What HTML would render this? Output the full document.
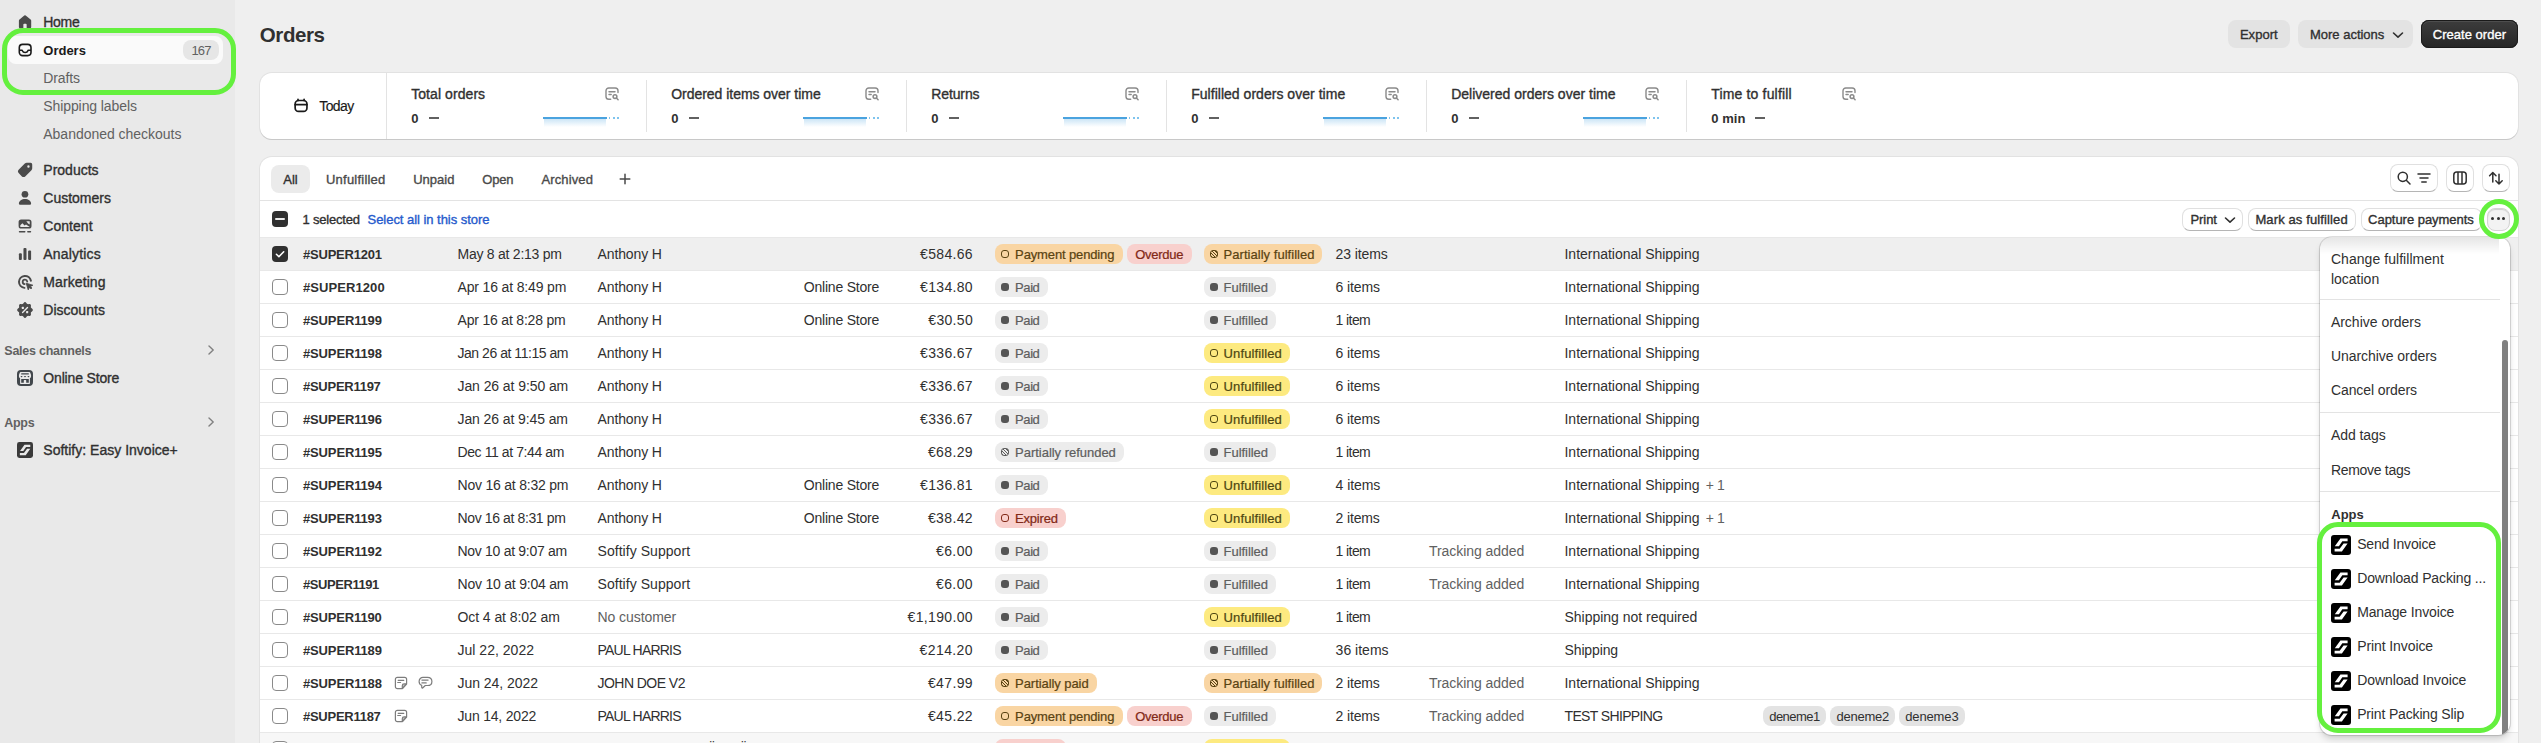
<!DOCTYPE html>
<html lang="en"><head><meta charset="utf-8"><title>Orders</title>
<style>
html,body{margin:0;padding:0;}
body{width:2541px;height:743px;overflow:hidden;background:#efefef;position:relative;font-family:"Liberation Sans",sans-serif;}
.b{position:absolute;box-sizing:border-box;}
.t{position:absolute;white-space:nowrap;line-height:20px;height:20px;}
</style></head><body>

<div class="b" style="left:0px;top:0px;width:235px;height:743px;background:#e9e9e9;border-radius:0px;"></div>
<svg class="b" style="left:15px;top:12px;" width="20" height="20" viewBox="0 0 20 20"><path fill="#4a4a4a" d="M9.300 3.450a1.100 1.100 0 0 1 1.400 0l4.900 4.100c.4.300.6.750.6 1.200V15a1.500 1.500 0 0 1-1.500 1.500H11.650V12.600a.9.9 0 0 0-.9-.9H9.250a.9.9 0 0 0-.9.9V16.500H5.400A1.500 1.500 0 0 1 3.900 15V8.750c0-.450.2-.9.6-1.200Z"/></svg>
<span class="t" style="left:43.3px;top:12.0px;font-size:14px;font-weight:400;color:#303030;letter-spacing:-0.287px;-webkit-text-stroke:0.35px #303030;">Home</span>
<div class="b" style="left:8px;top:36px;width:215px;height:28px;background:#fafafa;border-radius:8px;"></div>
<svg class="b" style="left:15px;top:40px;" width="20" height="20" viewBox="0 0 20 20"><rect x="4.300" y="4.400" width="11.700" height="11.200" rx="3.300" fill="none" stroke="#1a1a1a" stroke-width="1.600"/><path fill="none" stroke="#1a1a1a" stroke-width="1.600" stroke-linejoin="round" d="M4.300 10.200h2.300c.5 0 .9.300 1 .8.250 1 .95 1.550 2.550 1.550s2.300-.55 2.550-1.550c.1-.5.5-.8 1-.8H16"/></svg>
<span class="t" style="left:43.3px;top:40.5px;font-size:13px;font-weight:700;color:#1a1a1a;letter-spacing:-0.005px;">Orders</span>
<div class="b" style="left:183px;top:40px;width:36px;height:20px;background:#e6e6e6;border-radius:8px;"></div>
<span class="t" style="left:191.6px;top:41.0px;font-size:13px;font-weight:400;color:#616161;letter-spacing:-0.964px;">167</span>
<span class="t" style="left:43.3px;top:68.0px;font-size:14px;font-weight:400;color:#616161;letter-spacing:-0.123px;">Drafts</span>
<span class="t" style="left:43.3px;top:96.0px;font-size:14px;font-weight:400;color:#616161;letter-spacing:-0.097px;">Shipping labels</span>
<span class="t" style="left:43.3px;top:124.0px;font-size:14px;font-weight:400;color:#616161;letter-spacing:-0.024px;">Abandoned checkouts</span>
<span class="t" style="left:43.3px;top:160.0px;font-size:14px;font-weight:400;color:#303030;letter-spacing:0.006px;-webkit-text-stroke:0.35px #303030;">Products</span>
<span class="t" style="left:43.3px;top:188.0px;font-size:14px;font-weight:400;color:#303030;letter-spacing:-0.009px;-webkit-text-stroke:0.35px #303030;">Customers</span>
<span class="t" style="left:43.3px;top:216.0px;font-size:14px;font-weight:400;color:#303030;letter-spacing:0.038px;-webkit-text-stroke:0.35px #303030;">Content</span>
<span class="t" style="left:43.3px;top:244.0px;font-size:14px;font-weight:400;color:#303030;letter-spacing:0.175px;-webkit-text-stroke:0.35px #303030;">Analytics</span>
<span class="t" style="left:43.3px;top:272.0px;font-size:14px;font-weight:400;color:#303030;letter-spacing:0.092px;-webkit-text-stroke:0.35px #303030;">Marketing</span>
<span class="t" style="left:43.3px;top:300.0px;font-size:14px;font-weight:400;color:#303030;letter-spacing:0.014px;-webkit-text-stroke:0.35px #303030;">Discounts</span>
<svg class="b" style="left:15px;top:160px;" width="20" height="20" viewBox="0 0 20 20"><g transform="translate(10.2 9.800) scale(1.080) translate(-10 -10)"><path fill="#4a4a4a" fill-rule="evenodd" d="M11.400 3.500H15A1.500 1.500 0 0 1 16.500 5V8.600a2.500 2.500 0 0 1-.73 1.770l-5.500 5.500a2.500 2.500 0 0 1-3.540 0L4.130 13.270a2.500 2.500 0 0 1 0-3.540l5.500-5.500A2.500 2.500 0 0 1 11.400 3.500ZM13 8.100a1.100 1.100 0 1 0 0-2.200 1.100 1.100 0 0 0 0 2.200Z"/></g></svg>
<svg class="b" style="left:15px;top:188px;" width="20" height="20" viewBox="0 0 20 20"><circle cx="9.950" cy="6.250" r="3.350" fill="#4a4a4a"/><path fill="#4a4a4a" d="M3.900 15.400c0-2.700 2.900-4.500 6.100-4.500s6.100 1.800 6.100 4.500c0 .8-.6 1.400-1.400 1.400H5.300c-.8 0-1.400-.6-1.400-1.400Z"/></svg>
<svg class="b" style="left:15px;top:216px;" width="20" height="20" viewBox="0 0 20 20"><rect x="3.600" y="3.400" width="12.900" height="9.200" rx="2.600" fill="#4a4a4a"/><path d="M5.300 11V9.300L7.400 7.200 9.600 9.400 11 8.600 14.800 11Z" fill="#e9e9e9"/><path d="M11.300 5.300h3.400v3.100l-1.600-1z" fill="#e9e9e9"/><path d="M4.500 15.800h5.300M12.800 15.800h2.700" stroke="#4a4a4a" stroke-width="1.400" stroke-linecap="round"/></svg>
<svg class="b" style="left:15px;top:244px;" width="20" height="20" viewBox="0 0 20 20"><rect x="3.900" y="9.300" width="2.950" height="6.600" rx="1" fill="#4a4a4a"/><rect x="8.450" y="3.900" width="3.050" height="12" rx="1" fill="#4a4a4a"/><rect x="13.100" y="6.400" width="3" height="9.500" rx="1" fill="#4a4a4a"/></svg>
<svg class="b" style="left:15px;top:272px;" width="20" height="20" viewBox="0 0 20 20"><path fill="none" stroke="#4a4a4a" stroke-width="2" stroke-linecap="round" d="M15.900 8.800A6 6 0 1 0 9.400 15.870"/><path fill="none" stroke="#4a4a4a" stroke-width="1.800" stroke-linecap="round" d="M12.250 9.500A2.300 2.300 0 1 0 9.600 12.150"/><path fill="#4a4a4a" stroke="#4a4a4a" stroke-width=".8" stroke-linejoin="round" d="M11.200 11.200 17.900 13.200 15.400 14.500 16.900 16 16 16.900 14.500 15.400 13.200 17.900Z"/></svg>
<svg class="b" style="left:15px;top:300px;" width="20" height="20" viewBox="0 0 20 20"><path fill="#4a4a4a" d="M10.00 2.10L10.75 2.36L11.39 2.99L11.92 3.67L12.45 4.09L13.12 4.16L13.97 4.05L14.87 4.06L15.59 4.41L15.94 5.13L15.95 6.03L15.84 6.88L15.91 7.55L16.33 8.08L17.01 8.61L17.64 9.25L17.90 10.00L17.64 10.75L17.01 11.39L16.33 11.92L15.91 12.45L15.84 13.12L15.95 13.97L15.94 14.87L15.59 15.59L14.87 15.94L13.97 15.95L13.12 15.84L12.45 15.91L11.92 16.33L11.39 17.01L10.75 17.64L10.00 17.90L9.25 17.64L8.61 17.01L8.08 16.33L7.55 15.91L6.88 15.84L6.03 15.95L5.13 15.94L4.41 15.59L4.06 14.87L4.05 13.97L4.16 13.12L4.09 12.45L3.67 11.92L2.99 11.39L2.36 10.75L2.10 10.00L2.36 9.25L2.99 8.61L3.67 8.08L4.09 7.55L4.16 6.88L4.05 6.03L4.06 5.13L4.41 4.41L5.13 4.06L6.03 4.05L6.88 4.16L7.55 4.09L8.08 3.67L8.61 2.99L9.25 2.36Z"/><path d="M7.600 12.500 12.500 7.600" stroke="#e9e9e9" stroke-width="1.400" stroke-linecap="round"/><rect x="6.800" y="6.800" width="2.100" height="2.100" rx=".5" fill="#e9e9e9"/><rect x="11.100" y="11.100" width="2.100" height="2.100" rx=".5" fill="#e9e9e9"/></svg>
<span class="t" style="left:4.3px;top:340.8px;font-size:12.5px;font-weight:700;color:#616161;letter-spacing:-0.238px;">Sales channels</span>
<svg class="b" style="left:207.8px;top:345.3px;" width="6.2" height="10" viewBox="0 0 6.200 10"><path d="M1 1 5.200 5 1 9" fill="none" stroke="#808080" stroke-width="1.400" stroke-linecap="round" stroke-linejoin="round"/></svg>
<svg class="b" style="left:17px;top:370px;" width="16" height="16" viewBox="0 0 16 16"><rect width="16" height="16" rx="4" fill="#42474c"/><path fill="#e9e9e9" d="M3.600 1.900h8.800a.8.8 0 0 1 .75.500l.9 2.700v1.300a2 2 0 0 1-1.150 1.800V13.200a.9.9 0 0 1-.9.900H4a.9.9 0 0 1-.9-.9V8.200A2 2 0 0 1 1.950 6.400V5.100l.9-2.700a.8.8 0 0 1 .75-.5Z"/><rect x="4.200" y="3.200" width="7.600" height="1.300" rx=".3" fill="#42474c"/><path fill="#42474c" d="M3.400 6h2.300L4.550 7.600ZM6.850 6h2.300L8 7.600ZM10.300 6h2.300L11.450 7.600Z"/><path fill="#42474c" d="M4.200 9h7.600v3.800H9.200V10.500a.6.6 0 0 0-.6-.6H7.400a.6.6 0 0 0-.6.600V12.800H4.200Z"/></svg>
<span class="t" style="left:43.3px;top:367.8px;font-size:14px;font-weight:400;color:#303030;letter-spacing:-0.160px;-webkit-text-stroke:0.35px #303030;">Online Store</span>
<span class="t" style="left:4.3px;top:412.8px;font-size:12.5px;font-weight:700;color:#616161;letter-spacing:-0.313px;">Apps</span>
<svg class="b" style="left:207.8px;top:417.3px;" width="6.2" height="10" viewBox="0 0 6.200 10"><path d="M1 1 5.200 5 1 9" fill="none" stroke="#808080" stroke-width="1.400" stroke-linecap="round" stroke-linejoin="round"/></svg>
<svg class="b" style="left:17px;top:442px;" width="16" height="16" viewBox="0 0 20 20"><rect width="20" height="20" rx="3" fill="#3a3a3a"/><path fill="#e9e9e9" d="M9.400 3.400H16.600V6.300H11.300L7.900 11.300H3.800ZM12.600 8.500H16.600L10.900 16.600H3.600V13.800H8.700Z"/></svg>
<span class="t" style="left:43.3px;top:440.0px;font-size:14px;font-weight:400;color:#303030;letter-spacing:0.012px;-webkit-text-stroke:0.35px #303030;">Softify: Easy Invoice+</span>
<span class="t" style="left:259.8px;top:24.5px;font-size:20.5px;font-weight:700;color:#303030;letter-spacing:-0.404px;line-height:24px;height:24px;margin-top:-2px;">Orders</span>
<div class="b" style="left:2228px;top:20px;width:62px;height:28px;background:#e3e3e3;border-radius:8px;"></div>
<span class="t" style="left:2239.9px;top:25.3px;font-size:13px;font-weight:400;color:#303030;letter-spacing:0.038px;-webkit-text-stroke:0.35px #303030;">Export</span>
<div class="b" style="left:2298px;top:20px;width:115px;height:28px;background:#e3e3e3;border-radius:8px;"></div>
<span class="t" style="left:2310.0px;top:25.3px;font-size:13px;font-weight:400;color:#303030;letter-spacing:-0.010px;-webkit-text-stroke:0.35px #303030;">More actions</span>
<svg class="b" style="left:2389.5px;top:26.5px;" width="16" height="16" viewBox="0 0 16 16"><path d="M3.500 6 8 10.200 12.500 6" fill="none" stroke="#303030" stroke-width="1.600" stroke-linecap="round" stroke-linejoin="round"/></svg>
<div class="b" style="left:2421px;top:20px;width:97px;height:28px;background:linear-gradient(#3d3d3d,#262626);border-radius:8px;box-shadow:inset 0 0 0 1px #1a1a1a, inset 0 1px 0 1px #4d4d4d;"></div>
<span class="t" style="left:2432.8px;top:25.3px;font-size:13px;font-weight:400;color:#ffffff;letter-spacing:0.027px;-webkit-text-stroke:0.35px #ffffff;">Create order</span>
<div class="b" style="left:260px;top:73px;width:2257.6px;height:66px;background:#ffffff;border-radius:12px;box-shadow:0 1px 0 0 #c8c8c8, 0 0 0 1px #e2e2e2;"></div>
<div class="b" style="left:386px;top:73px;width:1px;height:66px;background:#e3e3e3;border-radius:0px;"></div>
<svg class="b" style="left:291px;top:96px;" width="20" height="20" viewBox="0 0 20 20"><rect x="4.150" y="4.500" width="11.800" height="10.900" rx="3.400" fill="none" stroke="#1a1a1a" stroke-width="1.700"/><path d="M4.150 8.650h11.800M7 3.300v1.200M13.100 3.300v1.200" fill="none" stroke="#1a1a1a" stroke-width="1.700" stroke-linecap="round"/></svg>
<span class="t" style="left:319.3px;top:96.4px;font-size:14px;font-weight:400;color:#1a1a1a;letter-spacing:-0.632px;-webkit-text-stroke:.150px #1a1a1a;">Today</span>
<span class="t" style="left:411.2px;top:84.2px;font-size:14px;font-weight:400;color:#303030;letter-spacing:0.071px;-webkit-text-stroke:0.35px #303030;">Total orders</span>
<span class="t" style="left:411.2px;top:108.5px;font-size:13px;font-weight:700;color:#303030;letter-spacing:0.770px;">0</span>
<div class="b" style="left:428.8px;top:117.3px;width:10.2px;height:1.4px;background:#616161;border-radius:0px;"></div>
<svg class="b" style="left:602.3px;top:84px;" width="20" height="20" viewBox="0 0 20 20"><path d="M8.700 15.300H6.800a2.800 2.800 0 0 1-2.800-2.800V6.800A2.800 2.800 0 0 1 6.800 4h6.400A2.800 2.800 0 0 1 16 6.800V8.500" fill="none" stroke="#8a8a8a" stroke-width="1.400" stroke-linecap="round"/><path d="M7 7.700h6M7 10.500h2.200" stroke="#8a8a8a" stroke-width="1.400" stroke-linecap="round"/><circle cx="13" cy="12.600" r="1.900" fill="none" stroke="#8a8a8a" stroke-width="1.500"/><path d="M14.600 14.200 16.100 15.700" stroke="#8a8a8a" stroke-width="1.500" stroke-linecap="round"/></svg>
<div class="b" style="left:543.1px;top:117px;width:64.3px;height:2px;background:#4aa3df;border-radius:0px;"></div>
<div class="b" style="left:543.6px;top:119px;width:62px;height:8px;background:linear-gradient(rgba(74,163,223,.28),rgba(74,163,223,0));border-radius:0px;"></div>
<div class="b" style="left:609.1px;top:117px;width:1.2px;height:2px;background:#7fc4ee;border-radius:0px;"></div>
<div class="b" style="left:613.1px;top:117px;width:2px;height:2px;background:#7fc4ee;border-radius:0px;"></div>
<div class="b" style="left:616.9px;top:117px;width:2px;height:2px;background:#7fc4ee;border-radius:0px;"></div>
<div class="b" style="left:646px;top:80px;width:1px;height:52px;background:#e3e3e3;border-radius:0px;"></div>
<span class="t" style="left:671.2px;top:84.2px;font-size:14px;font-weight:400;color:#303030;letter-spacing:-0.029px;-webkit-text-stroke:0.35px #303030;">Ordered items over time</span>
<span class="t" style="left:671.2px;top:108.5px;font-size:13px;font-weight:700;color:#303030;letter-spacing:0.770px;">0</span>
<div class="b" style="left:688.8000000000001px;top:117.3px;width:10.2px;height:1.4px;background:#616161;border-radius:0px;"></div>
<svg class="b" style="left:862.3000000000001px;top:84px;" width="20" height="20" viewBox="0 0 20 20"><path d="M8.700 15.300H6.800a2.800 2.800 0 0 1-2.800-2.800V6.800A2.800 2.800 0 0 1 6.800 4h6.400A2.800 2.800 0 0 1 16 6.800V8.500" fill="none" stroke="#8a8a8a" stroke-width="1.400" stroke-linecap="round"/><path d="M7 7.700h6M7 10.500h2.200" stroke="#8a8a8a" stroke-width="1.400" stroke-linecap="round"/><circle cx="13" cy="12.600" r="1.900" fill="none" stroke="#8a8a8a" stroke-width="1.500"/><path d="M14.600 14.200 16.100 15.700" stroke="#8a8a8a" stroke-width="1.500" stroke-linecap="round"/></svg>
<div class="b" style="left:803.1px;top:117px;width:64.3px;height:2px;background:#4aa3df;border-radius:0px;"></div>
<div class="b" style="left:803.6px;top:119px;width:62px;height:8px;background:linear-gradient(rgba(74,163,223,.28),rgba(74,163,223,0));border-radius:0px;"></div>
<div class="b" style="left:869.1px;top:117px;width:1.2px;height:2px;background:#7fc4ee;border-radius:0px;"></div>
<div class="b" style="left:873.1px;top:117px;width:2px;height:2px;background:#7fc4ee;border-radius:0px;"></div>
<div class="b" style="left:876.9px;top:117px;width:2px;height:2px;background:#7fc4ee;border-radius:0px;"></div>
<div class="b" style="left:906px;top:80px;width:1px;height:52px;background:#e3e3e3;border-radius:0px;"></div>
<span class="t" style="left:931.2px;top:84.2px;font-size:14px;font-weight:400;color:#303030;letter-spacing:-0.103px;-webkit-text-stroke:0.35px #303030;">Returns</span>
<span class="t" style="left:931.2px;top:108.5px;font-size:13px;font-weight:700;color:#303030;letter-spacing:0.770px;">0</span>
<div class="b" style="left:948.8000000000001px;top:117.3px;width:10.2px;height:1.4px;background:#616161;border-radius:0px;"></div>
<svg class="b" style="left:1122.3px;top:84px;" width="20" height="20" viewBox="0 0 20 20"><path d="M8.700 15.300H6.800a2.800 2.800 0 0 1-2.800-2.800V6.800A2.800 2.800 0 0 1 6.800 4h6.400A2.800 2.800 0 0 1 16 6.800V8.500" fill="none" stroke="#8a8a8a" stroke-width="1.400" stroke-linecap="round"/><path d="M7 7.700h6M7 10.500h2.200" stroke="#8a8a8a" stroke-width="1.400" stroke-linecap="round"/><circle cx="13" cy="12.600" r="1.900" fill="none" stroke="#8a8a8a" stroke-width="1.500"/><path d="M14.600 14.200 16.100 15.700" stroke="#8a8a8a" stroke-width="1.500" stroke-linecap="round"/></svg>
<div class="b" style="left:1063.1000000000001px;top:117px;width:64.3px;height:2px;background:#4aa3df;border-radius:0px;"></div>
<div class="b" style="left:1063.6000000000001px;top:119px;width:62px;height:8px;background:linear-gradient(rgba(74,163,223,.28),rgba(74,163,223,0));border-radius:0px;"></div>
<div class="b" style="left:1129.1000000000001px;top:117px;width:1.2px;height:2px;background:#7fc4ee;border-radius:0px;"></div>
<div class="b" style="left:1133.1000000000001px;top:117px;width:2px;height:2px;background:#7fc4ee;border-radius:0px;"></div>
<div class="b" style="left:1136.9px;top:117px;width:2px;height:2px;background:#7fc4ee;border-radius:0px;"></div>
<div class="b" style="left:1166px;top:80px;width:1px;height:52px;background:#e3e3e3;border-radius:0px;"></div>
<span class="t" style="left:1191.2px;top:84.2px;font-size:14px;font-weight:400;color:#303030;letter-spacing:0.028px;-webkit-text-stroke:0.35px #303030;">Fulfilled orders over time</span>
<span class="t" style="left:1191.2px;top:108.5px;font-size:13px;font-weight:700;color:#303030;letter-spacing:0.770px;">0</span>
<div class="b" style="left:1208.8px;top:117.3px;width:10.2px;height:1.4px;background:#616161;border-radius:0px;"></div>
<svg class="b" style="left:1382.3px;top:84px;" width="20" height="20" viewBox="0 0 20 20"><path d="M8.700 15.300H6.800a2.800 2.800 0 0 1-2.800-2.800V6.800A2.800 2.800 0 0 1 6.800 4h6.400A2.800 2.800 0 0 1 16 6.800V8.500" fill="none" stroke="#8a8a8a" stroke-width="1.400" stroke-linecap="round"/><path d="M7 7.700h6M7 10.500h2.200" stroke="#8a8a8a" stroke-width="1.400" stroke-linecap="round"/><circle cx="13" cy="12.600" r="1.900" fill="none" stroke="#8a8a8a" stroke-width="1.500"/><path d="M14.600 14.200 16.100 15.700" stroke="#8a8a8a" stroke-width="1.500" stroke-linecap="round"/></svg>
<div class="b" style="left:1323.1000000000001px;top:117px;width:64.3px;height:2px;background:#4aa3df;border-radius:0px;"></div>
<div class="b" style="left:1323.6000000000001px;top:119px;width:62px;height:8px;background:linear-gradient(rgba(74,163,223,.28),rgba(74,163,223,0));border-radius:0px;"></div>
<div class="b" style="left:1389.1000000000001px;top:117px;width:1.2px;height:2px;background:#7fc4ee;border-radius:0px;"></div>
<div class="b" style="left:1393.1000000000001px;top:117px;width:2px;height:2px;background:#7fc4ee;border-radius:0px;"></div>
<div class="b" style="left:1396.9px;top:117px;width:2px;height:2px;background:#7fc4ee;border-radius:0px;"></div>
<div class="b" style="left:1426px;top:80px;width:1px;height:52px;background:#e3e3e3;border-radius:0px;"></div>
<span class="t" style="left:1451.2px;top:84.2px;font-size:14px;font-weight:400;color:#303030;letter-spacing:0.005px;-webkit-text-stroke:0.35px #303030;">Delivered orders over time</span>
<span class="t" style="left:1451.2px;top:108.5px;font-size:13px;font-weight:700;color:#303030;letter-spacing:0.770px;">0</span>
<div class="b" style="left:1468.8px;top:117.3px;width:10.2px;height:1.4px;background:#616161;border-radius:0px;"></div>
<svg class="b" style="left:1642.3px;top:84px;" width="20" height="20" viewBox="0 0 20 20"><path d="M8.700 15.300H6.800a2.800 2.800 0 0 1-2.800-2.800V6.800A2.800 2.800 0 0 1 6.800 4h6.400A2.800 2.800 0 0 1 16 6.800V8.500" fill="none" stroke="#8a8a8a" stroke-width="1.400" stroke-linecap="round"/><path d="M7 7.700h6M7 10.500h2.200" stroke="#8a8a8a" stroke-width="1.400" stroke-linecap="round"/><circle cx="13" cy="12.600" r="1.900" fill="none" stroke="#8a8a8a" stroke-width="1.500"/><path d="M14.600 14.200 16.100 15.700" stroke="#8a8a8a" stroke-width="1.500" stroke-linecap="round"/></svg>
<div class="b" style="left:1583.1000000000001px;top:117px;width:64.3px;height:2px;background:#4aa3df;border-radius:0px;"></div>
<div class="b" style="left:1583.6000000000001px;top:119px;width:62px;height:8px;background:linear-gradient(rgba(74,163,223,.28),rgba(74,163,223,0));border-radius:0px;"></div>
<div class="b" style="left:1649.1000000000001px;top:117px;width:1.2px;height:2px;background:#7fc4ee;border-radius:0px;"></div>
<div class="b" style="left:1653.1000000000001px;top:117px;width:2px;height:2px;background:#7fc4ee;border-radius:0px;"></div>
<div class="b" style="left:1656.9px;top:117px;width:2px;height:2px;background:#7fc4ee;border-radius:0px;"></div>
<div class="b" style="left:1686px;top:80px;width:1px;height:52px;background:#e3e3e3;border-radius:0px;"></div>
<span class="t" style="left:1711.2px;top:84.2px;font-size:14px;font-weight:400;color:#303030;letter-spacing:0.170px;-webkit-text-stroke:0.35px #303030;">Time to fulfill</span>
<span class="t" style="left:1711.2px;top:108.5px;font-size:13px;font-weight:700;color:#303030;letter-spacing:0.089px;">0 min</span>
<div class="b" style="left:1754.5px;top:117.3px;width:10.6px;height:1.4px;background:#616161;border-radius:0px;"></div>
<svg class="b" style="left:1839.1000000000001px;top:84px;" width="20" height="20" viewBox="0 0 20 20"><path d="M8.700 15.300H6.800a2.800 2.800 0 0 1-2.800-2.800V6.800A2.800 2.800 0 0 1 6.800 4h6.400A2.800 2.800 0 0 1 16 6.800V8.500" fill="none" stroke="#8a8a8a" stroke-width="1.400" stroke-linecap="round"/><path d="M7 7.700h6M7 10.500h2.200" stroke="#8a8a8a" stroke-width="1.400" stroke-linecap="round"/><circle cx="13" cy="12.600" r="1.900" fill="none" stroke="#8a8a8a" stroke-width="1.500"/><path d="M14.600 14.200 16.100 15.700" stroke="#8a8a8a" stroke-width="1.500" stroke-linecap="round"/></svg>
<div class="b" style="left:260px;top:157px;width:2257.6px;height:620px;background:#ffffff;border-radius:12px;box-shadow:0 0 0 1px #e2e2e2;"></div>
<div class="b" style="left:271px;top:165px;width:39px;height:28px;background:#ebebeb;border-radius:8px;"></div>
<span class="t" style="left:283.3px;top:169.5px;font-size:13px;font-weight:400;color:#303030;letter-spacing:-0.083px;-webkit-text-stroke:0.35px #303030;">All</span>
<span class="t" style="left:326.0px;top:169.5px;font-size:13px;font-weight:400;color:#4a4a4a;letter-spacing:0.219px;-webkit-text-stroke:0.35px #4a4a4a;">Unfulfilled</span>
<span class="t" style="left:413.2px;top:169.5px;font-size:13px;font-weight:400;color:#4a4a4a;letter-spacing:0.017px;-webkit-text-stroke:0.35px #4a4a4a;">Unpaid</span>
<span class="t" style="left:482.3px;top:169.5px;font-size:13px;font-weight:400;color:#4a4a4a;letter-spacing:-0.176px;-webkit-text-stroke:0.35px #4a4a4a;">Open</span>
<span class="t" style="left:541.5px;top:169.5px;font-size:13px;font-weight:400;color:#4a4a4a;letter-spacing:0.115px;-webkit-text-stroke:0.35px #4a4a4a;">Archived</span>
<svg class="b" style="left:616.8px;top:170.8px;" width="16" height="16" viewBox="0 0 16 16"><path d="M8 3.200v9.600M3.200 8h9.600" stroke="#4a4a4a" stroke-width="1.500" stroke-linecap="round"/></svg>
<div class="b" style="left:2390px;top:164px;width:48px;height:28px;background:#ffffff;border-radius:8px;border:1px solid #e0e0e0;border-bottom:1.500px solid #b5b5b5;"></div>
<svg class="b" style="left:2394px;top:167.5px;" width="20" height="20" viewBox="0 0 20 20"><circle cx="8.800" cy="8.800" r="4.600" fill="none" stroke="#303030" stroke-width="1.500"/><path d="M12.300 12.300 16 16" stroke="#303030" stroke-width="1.500" stroke-linecap="round"/></svg>
<svg class="b" style="left:2414px;top:167.5px;" width="20" height="20" viewBox="0 0 20 20"><path d="M4 6h12M6 10h8M7.800 14h4.400" stroke="#303030" stroke-width="1.500" stroke-linecap="round"/></svg>
<div class="b" style="left:2446px;top:164px;width:28px;height:28px;background:#ffffff;border-radius:8px;border:1px solid #e0e0e0;border-bottom:1.500px solid #b5b5b5;"></div>
<svg class="b" style="left:2450px;top:167.5px;" width="20" height="20" viewBox="0 0 20 20"><rect x="3.800" y="4" width="12.400" height="12" rx="3" fill="none" stroke="#303030" stroke-width="1.500"/><path d="M8 4v12M12 4v12" stroke="#303030" stroke-width="1.500"/></svg>
<div class="b" style="left:2482px;top:164px;width:28px;height:28px;background:#ffffff;border-radius:8px;border:1px solid #e0e0e0;border-bottom:1.500px solid #b5b5b5;"></div>
<svg class="b" style="left:2486px;top:168px;" width="20" height="20" viewBox="0 0 20 20"><path d="M6.800 14V4.500M3.600 7.700 6.800 4.500 10 7.700M13 6.300V16M9.800 12.800 13 16 16.200 12.800" fill="none" stroke="#303030" stroke-width="1.500" stroke-linecap="round" stroke-linejoin="round"/></svg>
<div class="b" style="left:260px;top:200px;width:2257.6px;height:1px;background:#e3e3e3;border-radius:0px;"></div>
<div class="b" style="left:272px;top:211px;width:16px;height:16px;background:#303030;border-radius:4px;"></div>
<div class="b" style="left:275px;top:218.2px;width:10px;height:1.7px;background:#ececec;border-radius:1px;"></div>
<span class="t" style="left:302.4px;top:209.5px;font-size:13px;font-weight:400;color:#303030;letter-spacing:-0.176px;-webkit-text-stroke:0.35px #303030;">1 selected</span>
<span class="t" style="left:367.5px;top:209.5px;font-size:13px;font-weight:400;color:#255acc;letter-spacing:-0.035px;-webkit-text-stroke:0.35px #255acc;">Select all in this store</span>
<div class="b" style="left:2182px;top:207.5px;width:61px;height:23.5px;background:#ffffff;border-radius:8px;border:1px solid #e0e0e0;border-bottom-color:#b5b5b5;"></div>
<span class="t" style="left:2190.4px;top:209.5px;font-size:13px;font-weight:400;color:#303030;letter-spacing:-0.046px;-webkit-text-stroke:0.35px #303030;">Print</span>
<svg class="b" style="left:2221.5px;top:211.5px;" width="16" height="16" viewBox="0 0 16 16"><path d="M3.500 6 8 10.200 12.500 6" fill="none" stroke="#303030" stroke-width="1.600" stroke-linecap="round" stroke-linejoin="round"/></svg>
<div class="b" style="left:2247.5px;top:207.5px;width:108px;height:23.5px;background:#ffffff;border-radius:8px;border:1px solid #e0e0e0;border-bottom-color:#b5b5b5;"></div>
<span class="t" style="left:2255.4px;top:209.5px;font-size:13px;font-weight:400;color:#303030;letter-spacing:0.123px;-webkit-text-stroke:0.35px #303030;">Mark as fulfilled</span>
<div class="b" style="left:2360.5px;top:207.5px;width:121px;height:23.5px;background:#ffffff;border-radius:8px;border:1px solid #e0e0e0;border-bottom-color:#b5b5b5;"></div>
<span class="t" style="left:2368.1px;top:209.5px;font-size:13px;font-weight:400;color:#303030;letter-spacing:-0.033px;-webkit-text-stroke:0.35px #303030;">Capture payments</span>
<div class="b" style="left:2487px;top:208px;width:23px;height:23px;background:#f3f3f3;border-radius:8px;border:1px solid #d4d4d4;box-shadow:inset 0 1px 1px rgba(0,0,0,.15);"></div>
<div class="b" style="left:2490.9px;top:217.4px;width:3px;height:3px;background:#303030;border-radius:0px;border-radius:50%;"></div>
<div class="b" style="left:2496.5px;top:217.4px;width:3px;height:3px;background:#303030;border-radius:0px;border-radius:50%;"></div>
<div class="b" style="left:2502.0px;top:217.4px;width:3px;height:3px;background:#303030;border-radius:0px;border-radius:50%;"></div>
<div class="b" style="left:260px;top:237px;width:2257.6px;height:34px;background:#efefef;border-radius:0px;border-top:1px solid #e8e8e8;"></div>
<div class="b" style="left:272px;top:246px;width:16px;height:16px;background:#303030;border-radius:4px;"></div>
<svg class="b" style="left:272px;top:246px;" width="16" height="16" viewBox="0 0 16 16"><path d="M4.400 8.300 6.900 10.700 11.700 5.700" fill="none" stroke="#fff" stroke-width="1.550" stroke-linecap="round" stroke-linejoin="round"/></svg>
<span class="t" style="left:303.0px;top:244.5px;font-size:13px;font-weight:700;color:#303030;letter-spacing:-0.214px;">#SUPER1201</span>
<span class="t" style="left:457.5px;top:244.0px;font-size:14px;font-weight:400;color:#303030;letter-spacing:-0.248px;">May 8 at 2:13 pm</span>
<span class="t" style="left:597.5px;top:244.0px;font-size:14px;font-weight:400;color:#303030;letter-spacing:-0.119px;">Anthony H</span>
<span class="t" style="left:920.0px;top:244.0px;font-size:14px;font-weight:400;color:#303030;letter-spacing:0.342px;">€584.66</span>
<div class="b" style="left:994.8px;top:244px;width:127.8px;height:20px;background:#f9d5a3;border-radius:8px;"></div>
<div class="b" style="left:1000.8499999999999px;top:249.9px;width:8px;height:8px;background:transparent;border-radius:3px;border:1.650px solid #5a4312;"></div>
<span class="t" style="left:1015.1px;top:245.0px;font-size:13px;font-weight:400;color:#5a4312;letter-spacing:-0.132px;-webkit-text-stroke:.220px #5a4312;">Payment pending</span>
<div class="b" style="left:1126.8px;top:244px;width:65px;height:20px;background:#f8d0cd;border-radius:8px;"></div>
<span class="t" style="left:1135.2px;top:245.0px;font-size:13px;font-weight:400;color:#822917;letter-spacing:-0.266px;-webkit-text-stroke:.220px #822917;">Overdue</span>
<div class="b" style="left:1203.9px;top:244px;width:118.5px;height:20px;background:#f9d5a3;border-radius:8px;"></div>
<div class="b" style="left:1209.95px;top:249.9px;width:8px;height:8px;background:transparent;border-radius:3px;border:1.500px solid #5a4312;background:repeating-linear-gradient(45deg,#5a4312 0,#5a4312 1.150px,transparent 1.150px,transparent 2.250px);"></div>
<span class="t" style="left:1223.6px;top:245.0px;font-size:13px;font-weight:400;color:#5a4312;letter-spacing:0.031px;-webkit-text-stroke:.220px #5a4312;">Partially fulfilled</span>
<span class="t" style="left:1335.6px;top:244.0px;font-size:14px;font-weight:400;color:#303030;letter-spacing:-0.101px;">23 items</span>
<span class="t" style="left:1564.5px;top:244.0px;font-size:14px;font-weight:400;color:#303030;letter-spacing:-0.020px;">International Shipping</span>
<div class="b" style="left:260px;top:270px;width:2257.6px;height:34px;background:#ffffff;border-radius:0px;border-top:1px solid #e8e8e8;"></div>
<div class="b" style="left:272px;top:279px;width:16px;height:16px;background:#ffffff;border-radius:4px;border:1px solid #8a8a8a;"></div>
<span class="t" style="left:303.0px;top:277.5px;font-size:13px;font-weight:700;color:#303030;letter-spacing:0.076px;">#SUPER1200</span>
<span class="t" style="left:457.5px;top:277.0px;font-size:14px;font-weight:400;color:#303030;letter-spacing:-0.152px;">Apr 16 at 8:49 pm</span>
<span class="t" style="left:597.5px;top:277.0px;font-size:14px;font-weight:400;color:#303030;letter-spacing:-0.119px;">Anthony H</span>
<span class="t" style="left:803.7px;top:277.0px;font-size:14px;font-weight:400;color:#303030;letter-spacing:-0.194px;">Online Store</span>
<span class="t" style="left:920.0px;top:277.0px;font-size:14px;font-weight:400;color:#303030;letter-spacing:0.342px;">€134.80</span>
<div class="b" style="left:994.8px;top:277px;width:52.9px;height:20px;background:#ececec;border-radius:8px;"></div>
<div class="b" style="left:1000.8499999999999px;top:282.9px;width:8px;height:8px;background:#555555;border-radius:3px;"></div>
<span class="t" style="left:1015.1px;top:278.0px;font-size:13px;font-weight:400;color:#5e5e5e;letter-spacing:-0.430px;-webkit-text-stroke:.220px #5e5e5e;">Paid</span>
<div class="b" style="left:1203.9px;top:277px;width:72.0px;height:20px;background:#ececec;border-radius:8px;"></div>
<div class="b" style="left:1209.95px;top:282.9px;width:8px;height:8px;background:#555555;border-radius:3px;"></div>
<span class="t" style="left:1223.6px;top:278.0px;font-size:13px;font-weight:400;color:#5e5e5e;letter-spacing:-0.044px;-webkit-text-stroke:.220px #5e5e5e;">Fulfilled</span>
<span class="t" style="left:1335.6px;top:277.0px;font-size:14px;font-weight:400;color:#303030;letter-spacing:-0.104px;">6 items</span>
<span class="t" style="left:1564.5px;top:277.0px;font-size:14px;font-weight:400;color:#303030;letter-spacing:-0.020px;">International Shipping</span>
<div class="b" style="left:260px;top:303px;width:2257.6px;height:34px;background:#ffffff;border-radius:0px;border-top:1px solid #e8e8e8;"></div>
<div class="b" style="left:272px;top:312px;width:16px;height:16px;background:#ffffff;border-radius:4px;border:1px solid #8a8a8a;"></div>
<span class="t" style="left:303.0px;top:310.5px;font-size:13px;font-weight:700;color:#303030;letter-spacing:-0.143px;">#SUPER1199</span>
<span class="t" style="left:457.5px;top:310.0px;font-size:14px;font-weight:400;color:#303030;letter-spacing:-0.188px;">Apr 16 at 8:28 pm</span>
<span class="t" style="left:597.5px;top:310.0px;font-size:14px;font-weight:400;color:#303030;letter-spacing:-0.119px;">Anthony H</span>
<span class="t" style="left:803.7px;top:310.0px;font-size:14px;font-weight:400;color:#303030;letter-spacing:-0.194px;">Online Store</span>
<span class="t" style="left:928.3px;top:310.0px;font-size:14px;font-weight:400;color:#303030;letter-spacing:0.313px;">€30.50</span>
<div class="b" style="left:994.8px;top:310px;width:52.9px;height:20px;background:#ececec;border-radius:8px;"></div>
<div class="b" style="left:1000.8499999999999px;top:315.9px;width:8px;height:8px;background:#555555;border-radius:3px;"></div>
<span class="t" style="left:1015.1px;top:311.0px;font-size:13px;font-weight:400;color:#5e5e5e;letter-spacing:-0.430px;-webkit-text-stroke:.220px #5e5e5e;">Paid</span>
<div class="b" style="left:1203.9px;top:310px;width:72.0px;height:20px;background:#ececec;border-radius:8px;"></div>
<div class="b" style="left:1209.95px;top:315.9px;width:8px;height:8px;background:#555555;border-radius:3px;"></div>
<span class="t" style="left:1223.6px;top:311.0px;font-size:13px;font-weight:400;color:#5e5e5e;letter-spacing:-0.044px;-webkit-text-stroke:.220px #5e5e5e;">Fulfilled</span>
<span class="t" style="left:1335.6px;top:310.0px;font-size:14px;font-weight:400;color:#303030;letter-spacing:-0.587px;">1 item</span>
<span class="t" style="left:1564.5px;top:310.0px;font-size:14px;font-weight:400;color:#303030;letter-spacing:-0.020px;">International Shipping</span>
<div class="b" style="left:260px;top:336px;width:2257.6px;height:34px;background:#ffffff;border-radius:0px;border-top:1px solid #e8e8e8;"></div>
<div class="b" style="left:272px;top:345px;width:16px;height:16px;background:#ffffff;border-radius:4px;border:1px solid #8a8a8a;"></div>
<span class="t" style="left:303.0px;top:343.5px;font-size:13px;font-weight:700;color:#303030;letter-spacing:-0.143px;">#SUPER1198</span>
<span class="t" style="left:457.5px;top:343.0px;font-size:14px;font-weight:400;color:#303030;letter-spacing:-0.462px;">Jan 26 at 11:15 am</span>
<span class="t" style="left:597.5px;top:343.0px;font-size:14px;font-weight:400;color:#303030;letter-spacing:-0.119px;">Anthony H</span>
<span class="t" style="left:920.0px;top:343.0px;font-size:14px;font-weight:400;color:#303030;letter-spacing:0.342px;">€336.67</span>
<div class="b" style="left:994.8px;top:343px;width:52.9px;height:20px;background:#ececec;border-radius:8px;"></div>
<div class="b" style="left:1000.8499999999999px;top:348.9px;width:8px;height:8px;background:#555555;border-radius:3px;"></div>
<span class="t" style="left:1015.1px;top:344.0px;font-size:13px;font-weight:400;color:#5e5e5e;letter-spacing:-0.430px;-webkit-text-stroke:.220px #5e5e5e;">Paid</span>
<div class="b" style="left:1203.9px;top:343px;width:85.9px;height:20px;background:#fdea80;border-radius:8px;"></div>
<div class="b" style="left:1209.95px;top:348.9px;width:8px;height:8px;background:transparent;border-radius:3px;border:1.650px solid #4e4712;"></div>
<span class="t" style="left:1223.6px;top:344.0px;font-size:13px;font-weight:400;color:#4e4712;letter-spacing:0.110px;-webkit-text-stroke:.220px #4e4712;">Unfulfilled</span>
<span class="t" style="left:1335.6px;top:343.0px;font-size:14px;font-weight:400;color:#303030;letter-spacing:-0.104px;">6 items</span>
<span class="t" style="left:1564.5px;top:343.0px;font-size:14px;font-weight:400;color:#303030;letter-spacing:-0.020px;">International Shipping</span>
<div class="b" style="left:260px;top:369px;width:2257.6px;height:34px;background:#ffffff;border-radius:0px;border-top:1px solid #e8e8e8;"></div>
<div class="b" style="left:272px;top:378px;width:16px;height:16px;background:#ffffff;border-radius:4px;border:1px solid #8a8a8a;"></div>
<span class="t" style="left:303.0px;top:376.5px;font-size:13px;font-weight:700;color:#303030;letter-spacing:-0.263px;">#SUPER1197</span>
<span class="t" style="left:457.5px;top:376.0px;font-size:14px;font-weight:400;color:#303030;letter-spacing:-0.081px;">Jan 26 at 9:50 am</span>
<span class="t" style="left:597.5px;top:376.0px;font-size:14px;font-weight:400;color:#303030;letter-spacing:-0.119px;">Anthony H</span>
<span class="t" style="left:920.0px;top:376.0px;font-size:14px;font-weight:400;color:#303030;letter-spacing:0.342px;">€336.67</span>
<div class="b" style="left:994.8px;top:376px;width:52.9px;height:20px;background:#ececec;border-radius:8px;"></div>
<div class="b" style="left:1000.8499999999999px;top:381.9px;width:8px;height:8px;background:#555555;border-radius:3px;"></div>
<span class="t" style="left:1015.1px;top:377.0px;font-size:13px;font-weight:400;color:#5e5e5e;letter-spacing:-0.430px;-webkit-text-stroke:.220px #5e5e5e;">Paid</span>
<div class="b" style="left:1203.9px;top:376px;width:85.9px;height:20px;background:#fdea80;border-radius:8px;"></div>
<div class="b" style="left:1209.95px;top:381.9px;width:8px;height:8px;background:transparent;border-radius:3px;border:1.650px solid #4e4712;"></div>
<span class="t" style="left:1223.6px;top:377.0px;font-size:13px;font-weight:400;color:#4e4712;letter-spacing:0.110px;-webkit-text-stroke:.220px #4e4712;">Unfulfilled</span>
<span class="t" style="left:1335.6px;top:376.0px;font-size:14px;font-weight:400;color:#303030;letter-spacing:-0.104px;">6 items</span>
<span class="t" style="left:1564.5px;top:376.0px;font-size:14px;font-weight:400;color:#303030;letter-spacing:-0.020px;">International Shipping</span>
<div class="b" style="left:260px;top:402px;width:2257.6px;height:34px;background:#ffffff;border-radius:0px;border-top:1px solid #e8e8e8;"></div>
<div class="b" style="left:272px;top:411px;width:16px;height:16px;background:#ffffff;border-radius:4px;border:1px solid #8a8a8a;"></div>
<span class="t" style="left:303.0px;top:409.5px;font-size:13px;font-weight:700;color:#303030;letter-spacing:-0.143px;">#SUPER1196</span>
<span class="t" style="left:457.5px;top:409.0px;font-size:14px;font-weight:400;color:#303030;letter-spacing:-0.099px;">Jan 26 at 9:45 am</span>
<span class="t" style="left:597.5px;top:409.0px;font-size:14px;font-weight:400;color:#303030;letter-spacing:-0.119px;">Anthony H</span>
<span class="t" style="left:920.0px;top:409.0px;font-size:14px;font-weight:400;color:#303030;letter-spacing:0.342px;">€336.67</span>
<div class="b" style="left:994.8px;top:409px;width:52.9px;height:20px;background:#ececec;border-radius:8px;"></div>
<div class="b" style="left:1000.8499999999999px;top:414.9px;width:8px;height:8px;background:#555555;border-radius:3px;"></div>
<span class="t" style="left:1015.1px;top:410.0px;font-size:13px;font-weight:400;color:#5e5e5e;letter-spacing:-0.430px;-webkit-text-stroke:.220px #5e5e5e;">Paid</span>
<div class="b" style="left:1203.9px;top:409px;width:85.9px;height:20px;background:#fdea80;border-radius:8px;"></div>
<div class="b" style="left:1209.95px;top:414.9px;width:8px;height:8px;background:transparent;border-radius:3px;border:1.650px solid #4e4712;"></div>
<span class="t" style="left:1223.6px;top:410.0px;font-size:13px;font-weight:400;color:#4e4712;letter-spacing:0.110px;-webkit-text-stroke:.220px #4e4712;">Unfulfilled</span>
<span class="t" style="left:1335.6px;top:409.0px;font-size:14px;font-weight:400;color:#303030;letter-spacing:-0.104px;">6 items</span>
<span class="t" style="left:1564.5px;top:409.0px;font-size:14px;font-weight:400;color:#303030;letter-spacing:-0.020px;">International Shipping</span>
<div class="b" style="left:260px;top:435px;width:2257.6px;height:34px;background:#ffffff;border-radius:0px;border-top:1px solid #e8e8e8;"></div>
<div class="b" style="left:272px;top:444px;width:16px;height:16px;background:#ffffff;border-radius:4px;border:1px solid #8a8a8a;"></div>
<span class="t" style="left:303.0px;top:442.5px;font-size:13px;font-weight:700;color:#303030;letter-spacing:-0.143px;">#SUPER1195</span>
<span class="t" style="left:457.5px;top:442.0px;font-size:14px;font-weight:400;color:#303030;letter-spacing:-0.410px;">Dec 11 at 7:44 am</span>
<span class="t" style="left:597.5px;top:442.0px;font-size:14px;font-weight:400;color:#303030;letter-spacing:-0.119px;">Anthony H</span>
<span class="t" style="left:927.9px;top:442.0px;font-size:14px;font-weight:400;color:#303030;letter-spacing:0.380px;">€68.29</span>
<div class="b" style="left:994.8px;top:442px;width:129.3px;height:20px;background:#ececec;border-radius:8px;"></div>
<div class="b" style="left:1000.8499999999999px;top:447.9px;width:8px;height:8px;background:transparent;border-radius:3px;border:1.500px solid #5e5e5e;background:repeating-linear-gradient(45deg,#5e5e5e 0,#5e5e5e 1.150px,transparent 1.150px,transparent 2.250px);"></div>
<span class="t" style="left:1015.1px;top:443.0px;font-size:13px;font-weight:400;color:#5e5e5e;letter-spacing:-0.026px;-webkit-text-stroke:.220px #5e5e5e;">Partially refunded</span>
<div class="b" style="left:1203.9px;top:442px;width:72.0px;height:20px;background:#ececec;border-radius:8px;"></div>
<div class="b" style="left:1209.95px;top:447.9px;width:8px;height:8px;background:#555555;border-radius:3px;"></div>
<span class="t" style="left:1223.6px;top:443.0px;font-size:13px;font-weight:400;color:#5e5e5e;letter-spacing:-0.044px;-webkit-text-stroke:.220px #5e5e5e;">Fulfilled</span>
<span class="t" style="left:1335.6px;top:442.0px;font-size:14px;font-weight:400;color:#303030;letter-spacing:-0.587px;">1 item</span>
<span class="t" style="left:1564.5px;top:442.0px;font-size:14px;font-weight:400;color:#303030;letter-spacing:-0.020px;">International Shipping</span>
<div class="b" style="left:260px;top:468px;width:2257.6px;height:34px;background:#ffffff;border-radius:0px;border-top:1px solid #e8e8e8;"></div>
<div class="b" style="left:272px;top:477px;width:16px;height:16px;background:#ffffff;border-radius:4px;border:1px solid #8a8a8a;"></div>
<span class="t" style="left:303.0px;top:475.5px;font-size:13px;font-weight:700;color:#303030;letter-spacing:-0.143px;">#SUPER1194</span>
<span class="t" style="left:457.5px;top:475.0px;font-size:14px;font-weight:400;color:#303030;letter-spacing:-0.212px;">Nov 16 at 8:32 pm</span>
<span class="t" style="left:597.5px;top:475.0px;font-size:14px;font-weight:400;color:#303030;letter-spacing:-0.119px;">Anthony H</span>
<span class="t" style="left:803.7px;top:475.0px;font-size:14px;font-weight:400;color:#303030;letter-spacing:-0.194px;">Online Store</span>
<span class="t" style="left:920.0px;top:475.0px;font-size:14px;font-weight:400;color:#303030;letter-spacing:0.342px;">€136.81</span>
<div class="b" style="left:994.8px;top:475px;width:52.9px;height:20px;background:#ececec;border-radius:8px;"></div>
<div class="b" style="left:1000.8499999999999px;top:480.9px;width:8px;height:8px;background:#555555;border-radius:3px;"></div>
<span class="t" style="left:1015.1px;top:476.0px;font-size:13px;font-weight:400;color:#5e5e5e;letter-spacing:-0.430px;-webkit-text-stroke:.220px #5e5e5e;">Paid</span>
<div class="b" style="left:1203.9px;top:475px;width:85.9px;height:20px;background:#fdea80;border-radius:8px;"></div>
<div class="b" style="left:1209.95px;top:480.9px;width:8px;height:8px;background:transparent;border-radius:3px;border:1.650px solid #4e4712;"></div>
<span class="t" style="left:1223.6px;top:476.0px;font-size:13px;font-weight:400;color:#4e4712;letter-spacing:0.110px;-webkit-text-stroke:.220px #4e4712;">Unfulfilled</span>
<span class="t" style="left:1335.6px;top:475.0px;font-size:14px;font-weight:400;color:#303030;letter-spacing:-0.061px;">4 items</span>
<span class="t" style="left:1564.5px;top:475.0px;font-size:14px;font-weight:400;color:#303030;letter-spacing:-0.020px;">International Shipping</span>
<span class="t" style="left:1705.7px;top:475.0px;font-size:14px;font-weight:400;color:#616161;letter-spacing:-0.351px;">+ 1</span>
<div class="b" style="left:260px;top:501px;width:2257.6px;height:34px;background:#ffffff;border-radius:0px;border-top:1px solid #e8e8e8;"></div>
<div class="b" style="left:272px;top:510px;width:16px;height:16px;background:#ffffff;border-radius:4px;border:1px solid #8a8a8a;"></div>
<span class="t" style="left:303.0px;top:508.5px;font-size:13px;font-weight:700;color:#303030;letter-spacing:-0.143px;">#SUPER1193</span>
<span class="t" style="left:457.5px;top:508.0px;font-size:14px;font-weight:400;color:#303030;letter-spacing:-0.382px;">Nov 16 at 8:31 pm</span>
<span class="t" style="left:597.5px;top:508.0px;font-size:14px;font-weight:400;color:#303030;letter-spacing:-0.119px;">Anthony H</span>
<span class="t" style="left:803.7px;top:508.0px;font-size:14px;font-weight:400;color:#303030;letter-spacing:-0.194px;">Online Store</span>
<span class="t" style="left:927.9px;top:508.0px;font-size:14px;font-weight:400;color:#303030;letter-spacing:0.380px;">€38.42</span>
<div class="b" style="left:994.8px;top:508px;width:71.2px;height:20px;background:#f8d0cd;border-radius:8px;"></div>
<div class="b" style="left:1000.8499999999999px;top:513.9px;width:8px;height:8px;background:transparent;border-radius:3px;border:1.650px solid #822917;"></div>
<span class="t" style="left:1015.1px;top:509.0px;font-size:13px;font-weight:400;color:#822917;letter-spacing:-0.211px;-webkit-text-stroke:.220px #822917;">Expired</span>
<div class="b" style="left:1203.9px;top:508px;width:85.9px;height:20px;background:#fdea80;border-radius:8px;"></div>
<div class="b" style="left:1209.95px;top:513.9px;width:8px;height:8px;background:transparent;border-radius:3px;border:1.650px solid #4e4712;"></div>
<span class="t" style="left:1223.6px;top:509.0px;font-size:13px;font-weight:400;color:#4e4712;letter-spacing:0.110px;-webkit-text-stroke:.220px #4e4712;">Unfulfilled</span>
<span class="t" style="left:1335.6px;top:508.0px;font-size:14px;font-weight:400;color:#303030;letter-spacing:-0.146px;">2 items</span>
<span class="t" style="left:1564.5px;top:508.0px;font-size:14px;font-weight:400;color:#303030;letter-spacing:-0.020px;">International Shipping</span>
<span class="t" style="left:1705.7px;top:508.0px;font-size:14px;font-weight:400;color:#616161;letter-spacing:-0.351px;">+ 1</span>
<div class="b" style="left:260px;top:534px;width:2257.6px;height:34px;background:#ffffff;border-radius:0px;border-top:1px solid #e8e8e8;"></div>
<div class="b" style="left:272px;top:543px;width:16px;height:16px;background:#ffffff;border-radius:4px;border:1px solid #8a8a8a;"></div>
<span class="t" style="left:303.0px;top:541.5px;font-size:13px;font-weight:700;color:#303030;letter-spacing:-0.143px;">#SUPER1192</span>
<span class="t" style="left:457.5px;top:541.0px;font-size:14px;font-weight:400;color:#303030;letter-spacing:-0.294px;">Nov 10 at 9:07 am</span>
<span class="t" style="left:597.5px;top:541.0px;font-size:14px;font-weight:400;color:#303030;letter-spacing:0.051px;">Softify Support</span>
<span class="t" style="left:936.0px;top:541.0px;font-size:14px;font-weight:400;color:#303030;letter-spacing:0.393px;">€6.00</span>
<div class="b" style="left:994.8px;top:541px;width:52.9px;height:20px;background:#ececec;border-radius:8px;"></div>
<div class="b" style="left:1000.8499999999999px;top:546.9px;width:8px;height:8px;background:#555555;border-radius:3px;"></div>
<span class="t" style="left:1015.1px;top:542.0px;font-size:13px;font-weight:400;color:#5e5e5e;letter-spacing:-0.430px;-webkit-text-stroke:.220px #5e5e5e;">Paid</span>
<div class="b" style="left:1203.9px;top:541px;width:72.0px;height:20px;background:#ececec;border-radius:8px;"></div>
<div class="b" style="left:1209.95px;top:546.9px;width:8px;height:8px;background:#555555;border-radius:3px;"></div>
<span class="t" style="left:1223.6px;top:542.0px;font-size:13px;font-weight:400;color:#5e5e5e;letter-spacing:-0.044px;-webkit-text-stroke:.220px #5e5e5e;">Fulfilled</span>
<span class="t" style="left:1335.6px;top:541.0px;font-size:14px;font-weight:400;color:#303030;letter-spacing:-0.587px;">1 item</span>
<span class="t" style="left:1428.9px;top:541.0px;font-size:14px;font-weight:400;color:#616161;letter-spacing:-0.042px;">Tracking added</span>
<span class="t" style="left:1564.5px;top:541.0px;font-size:14px;font-weight:400;color:#303030;letter-spacing:-0.020px;">International Shipping</span>
<div class="b" style="left:260px;top:567px;width:2257.6px;height:34px;background:#ffffff;border-radius:0px;border-top:1px solid #e8e8e8;"></div>
<div class="b" style="left:272px;top:576px;width:16px;height:16px;background:#ffffff;border-radius:4px;border:1px solid #8a8a8a;"></div>
<span class="t" style="left:303.0px;top:574.5px;font-size:13px;font-weight:700;color:#303030;letter-spacing:-0.433px;">#SUPER1191</span>
<span class="t" style="left:457.5px;top:574.0px;font-size:14px;font-weight:400;color:#303030;letter-spacing:-0.212px;">Nov 10 at 9:04 am</span>
<span class="t" style="left:597.5px;top:574.0px;font-size:14px;font-weight:400;color:#303030;letter-spacing:0.051px;">Softify Support</span>
<span class="t" style="left:936.0px;top:574.0px;font-size:14px;font-weight:400;color:#303030;letter-spacing:0.393px;">€6.00</span>
<div class="b" style="left:994.8px;top:574px;width:52.9px;height:20px;background:#ececec;border-radius:8px;"></div>
<div class="b" style="left:1000.8499999999999px;top:579.9px;width:8px;height:8px;background:#555555;border-radius:3px;"></div>
<span class="t" style="left:1015.1px;top:575.0px;font-size:13px;font-weight:400;color:#5e5e5e;letter-spacing:-0.430px;-webkit-text-stroke:.220px #5e5e5e;">Paid</span>
<div class="b" style="left:1203.9px;top:574px;width:72.0px;height:20px;background:#ececec;border-radius:8px;"></div>
<div class="b" style="left:1209.95px;top:579.9px;width:8px;height:8px;background:#555555;border-radius:3px;"></div>
<span class="t" style="left:1223.6px;top:575.0px;font-size:13px;font-weight:400;color:#5e5e5e;letter-spacing:-0.044px;-webkit-text-stroke:.220px #5e5e5e;">Fulfilled</span>
<span class="t" style="left:1335.6px;top:574.0px;font-size:14px;font-weight:400;color:#303030;letter-spacing:-0.587px;">1 item</span>
<span class="t" style="left:1428.9px;top:574.0px;font-size:14px;font-weight:400;color:#616161;letter-spacing:-0.042px;">Tracking added</span>
<span class="t" style="left:1564.5px;top:574.0px;font-size:14px;font-weight:400;color:#303030;letter-spacing:-0.020px;">International Shipping</span>
<div class="b" style="left:260px;top:600px;width:2257.6px;height:34px;background:#ffffff;border-radius:0px;border-top:1px solid #e8e8e8;"></div>
<div class="b" style="left:272px;top:609px;width:16px;height:16px;background:#ffffff;border-radius:4px;border:1px solid #8a8a8a;"></div>
<span class="t" style="left:303.0px;top:607.5px;font-size:13px;font-weight:700;color:#303030;letter-spacing:-0.163px;">#SUPER1190</span>
<span class="t" style="left:457.5px;top:607.0px;font-size:14px;font-weight:400;color:#303030;letter-spacing:-0.075px;">Oct 4 at 8:02 am</span>
<span class="t" style="left:597.5px;top:607.0px;font-size:14px;font-weight:400;color:#616161;letter-spacing:-0.069px;">No customer</span>
<span class="t" style="left:907.6px;top:607.0px;font-size:14px;font-weight:400;color:#303030;letter-spacing:0.346px;">€1,190.00</span>
<div class="b" style="left:994.8px;top:607px;width:52.9px;height:20px;background:#ececec;border-radius:8px;"></div>
<div class="b" style="left:1000.8499999999999px;top:612.9px;width:8px;height:8px;background:#555555;border-radius:3px;"></div>
<span class="t" style="left:1015.1px;top:608.0px;font-size:13px;font-weight:400;color:#5e5e5e;letter-spacing:-0.430px;-webkit-text-stroke:.220px #5e5e5e;">Paid</span>
<div class="b" style="left:1203.9px;top:607px;width:85.9px;height:20px;background:#fdea80;border-radius:8px;"></div>
<div class="b" style="left:1209.95px;top:612.9px;width:8px;height:8px;background:transparent;border-radius:3px;border:1.650px solid #4e4712;"></div>
<span class="t" style="left:1223.6px;top:608.0px;font-size:13px;font-weight:400;color:#4e4712;letter-spacing:0.110px;-webkit-text-stroke:.220px #4e4712;">Unfulfilled</span>
<span class="t" style="left:1335.6px;top:607.0px;font-size:14px;font-weight:400;color:#303030;letter-spacing:-0.587px;">1 item</span>
<span class="t" style="left:1564.5px;top:607.0px;font-size:14px;font-weight:400;color:#303030;letter-spacing:-0.019px;">Shipping not required</span>
<div class="b" style="left:260px;top:633px;width:2257.6px;height:34px;background:#ffffff;border-radius:0px;border-top:1px solid #e8e8e8;"></div>
<div class="b" style="left:272px;top:642px;width:16px;height:16px;background:#ffffff;border-radius:4px;border:1px solid #8a8a8a;"></div>
<span class="t" style="left:303.0px;top:640.5px;font-size:13px;font-weight:700;color:#303030;letter-spacing:-0.143px;">#SUPER1189</span>
<span class="t" style="left:457.5px;top:640.0px;font-size:14px;font-weight:400;color:#303030;letter-spacing:0.018px;">Jul 22, 2022</span>
<span class="t" style="left:597.5px;top:640.0px;font-size:14px;font-weight:400;color:#303030;letter-spacing:-0.773px;">PAUL HARRIS</span>
<span class="t" style="left:919.6px;top:640.0px;font-size:14px;font-weight:400;color:#303030;letter-spacing:0.399px;">€214.20</span>
<div class="b" style="left:994.8px;top:640px;width:52.9px;height:20px;background:#ececec;border-radius:8px;"></div>
<div class="b" style="left:1000.8499999999999px;top:645.9px;width:8px;height:8px;background:#555555;border-radius:3px;"></div>
<span class="t" style="left:1015.1px;top:641.0px;font-size:13px;font-weight:400;color:#5e5e5e;letter-spacing:-0.430px;-webkit-text-stroke:.220px #5e5e5e;">Paid</span>
<div class="b" style="left:1203.9px;top:640px;width:72.0px;height:20px;background:#ececec;border-radius:8px;"></div>
<div class="b" style="left:1209.95px;top:645.9px;width:8px;height:8px;background:#555555;border-radius:3px;"></div>
<span class="t" style="left:1223.6px;top:641.0px;font-size:13px;font-weight:400;color:#5e5e5e;letter-spacing:-0.044px;-webkit-text-stroke:.220px #5e5e5e;">Fulfilled</span>
<span class="t" style="left:1335.6px;top:640.0px;font-size:14px;font-weight:400;color:#303030;letter-spacing:0.011px;">36 items</span>
<span class="t" style="left:1564.5px;top:640.0px;font-size:14px;font-weight:400;color:#303030;letter-spacing:-0.124px;">Shipping</span>
<div class="b" style="left:260px;top:666px;width:2257.6px;height:34px;background:#ffffff;border-radius:0px;border-top:1px solid #e8e8e8;"></div>
<div class="b" style="left:272px;top:675px;width:16px;height:16px;background:#ffffff;border-radius:4px;border:1px solid #8a8a8a;"></div>
<span class="t" style="left:303.0px;top:673.5px;font-size:13px;font-weight:700;color:#303030;letter-spacing:-0.143px;">#SUPER1188</span>
<svg class="b" style="left:394px;top:676px;" width="14" height="14" viewBox="0 0 14 14"><path d="M3.400 1.300h7.200a2 2 0 0 1 2 2v4.700L8.300 12.700H3.400a2 2 0 0 1-2-2V3.300a2 2 0 0 1 2-2Z" fill="none" stroke="#7d7d7d" stroke-width="1.200" stroke-linejoin="round"/><path d="M12.500 7.900H10.100a1.800 1.800 0 0 0-1.800 1.800v2.800Z" fill="#c4c4c4" stroke="#7d7d7d" stroke-width="1.200" stroke-linejoin="round"/><path d="M4.200 4.300h5.600M3.700 6.500h2.900" fill="none" stroke="#7d7d7d" stroke-width="1.200" stroke-linecap="round"/></svg>
<svg class="b" style="left:417.6px;top:676.4px;" width="15" height="14" viewBox="0 0 15 14"><path d="M5 1.300h4.500c2.600 0 4.400 1.800 4.400 4.100s-1.800 4.100-4.400 4.100H7.300L4.600 12c-.35.300-.85.050-.85-.4L3.700 9.200C2.100 8.600 1.100 7.100 1.100 5.400c0-2.300 1.800-4.100 3.900-4.100Z" fill="none" stroke="#7d7d7d" stroke-width="1.200" stroke-linejoin="round"/><path d="M3.900 4.100h6.200M3.900 6.900h4.300" stroke="#7d7d7d" stroke-width="1.200" stroke-linecap="round"/></svg>
<span class="t" style="left:457.5px;top:673.0px;font-size:14px;font-weight:400;color:#303030;letter-spacing:-0.030px;">Jun 24, 2022</span>
<span class="t" style="left:597.5px;top:673.0px;font-size:14px;font-weight:400;color:#303030;letter-spacing:-0.541px;">JOHN DOE V2</span>
<span class="t" style="left:927.9px;top:673.0px;font-size:14px;font-weight:400;color:#303030;letter-spacing:0.380px;">€47.99</span>
<div class="b" style="left:994.8px;top:673px;width:102.1px;height:20px;background:#f9d5a3;border-radius:8px;"></div>
<div class="b" style="left:1000.8499999999999px;top:678.9px;width:8px;height:8px;background:transparent;border-radius:3px;border:1.500px solid #5a4312;background:repeating-linear-gradient(45deg,#5a4312 0,#5a4312 1.150px,transparent 1.150px,transparent 2.250px);"></div>
<span class="t" style="left:1015.1px;top:674.0px;font-size:13px;font-weight:400;color:#5a4312;letter-spacing:-0.066px;-webkit-text-stroke:.220px #5a4312;">Partially paid</span>
<div class="b" style="left:1203.9px;top:673px;width:118.5px;height:20px;background:#f9d5a3;border-radius:8px;"></div>
<div class="b" style="left:1209.95px;top:678.9px;width:8px;height:8px;background:transparent;border-radius:3px;border:1.500px solid #5a4312;background:repeating-linear-gradient(45deg,#5a4312 0,#5a4312 1.150px,transparent 1.150px,transparent 2.250px);"></div>
<span class="t" style="left:1223.6px;top:674.0px;font-size:13px;font-weight:400;color:#5a4312;letter-spacing:0.031px;-webkit-text-stroke:.220px #5a4312;">Partially fulfilled</span>
<span class="t" style="left:1335.6px;top:673.0px;font-size:14px;font-weight:400;color:#303030;letter-spacing:-0.146px;">2 items</span>
<span class="t" style="left:1428.9px;top:673.0px;font-size:14px;font-weight:400;color:#616161;letter-spacing:-0.042px;">Tracking added</span>
<span class="t" style="left:1564.5px;top:673.0px;font-size:14px;font-weight:400;color:#303030;letter-spacing:-0.020px;">International Shipping</span>
<div class="b" style="left:260px;top:699px;width:2257.6px;height:34px;background:#ffffff;border-radius:0px;border-top:1px solid #e8e8e8;"></div>
<div class="b" style="left:272px;top:708px;width:16px;height:16px;background:#ffffff;border-radius:4px;border:1px solid #8a8a8a;"></div>
<span class="t" style="left:303.0px;top:706.5px;font-size:13px;font-weight:700;color:#303030;letter-spacing:-0.263px;">#SUPER1187</span>
<svg class="b" style="left:394px;top:709px;" width="14" height="14" viewBox="0 0 14 14"><path d="M3.400 1.300h7.200a2 2 0 0 1 2 2v4.700L8.300 12.700H3.400a2 2 0 0 1-2-2V3.300a2 2 0 0 1 2-2Z" fill="none" stroke="#7d7d7d" stroke-width="1.200" stroke-linejoin="round"/><path d="M12.500 7.900H10.100a1.800 1.800 0 0 0-1.800 1.800v2.800Z" fill="#c4c4c4" stroke="#7d7d7d" stroke-width="1.200" stroke-linejoin="round"/><path d="M4.200 4.300h5.600M3.700 6.500h2.900" fill="none" stroke="#7d7d7d" stroke-width="1.200" stroke-linecap="round"/></svg>
<span class="t" style="left:457.5px;top:706.0px;font-size:14px;font-weight:400;color:#303030;letter-spacing:-0.197px;">Jun 14, 2022</span>
<span class="t" style="left:597.5px;top:706.0px;font-size:14px;font-weight:400;color:#303030;letter-spacing:-0.773px;">PAUL HARRIS</span>
<span class="t" style="left:927.9px;top:706.0px;font-size:14px;font-weight:400;color:#303030;letter-spacing:0.380px;">€45.22</span>
<div class="b" style="left:994.8px;top:706px;width:127.8px;height:20px;background:#f9d5a3;border-radius:8px;"></div>
<div class="b" style="left:1000.8499999999999px;top:711.9px;width:8px;height:8px;background:transparent;border-radius:3px;border:1.650px solid #5a4312;"></div>
<span class="t" style="left:1015.1px;top:707.0px;font-size:13px;font-weight:400;color:#5a4312;letter-spacing:-0.132px;-webkit-text-stroke:.220px #5a4312;">Payment pending</span>
<div class="b" style="left:1126.8px;top:706px;width:65px;height:20px;background:#f8d0cd;border-radius:8px;"></div>
<span class="t" style="left:1135.2px;top:707.0px;font-size:13px;font-weight:400;color:#822917;letter-spacing:-0.266px;-webkit-text-stroke:.220px #822917;">Overdue</span>
<div class="b" style="left:1203.9px;top:706px;width:72.0px;height:20px;background:#ececec;border-radius:8px;"></div>
<div class="b" style="left:1209.95px;top:711.9px;width:8px;height:8px;background:#555555;border-radius:3px;"></div>
<span class="t" style="left:1223.6px;top:707.0px;font-size:13px;font-weight:400;color:#5e5e5e;letter-spacing:-0.044px;-webkit-text-stroke:.220px #5e5e5e;">Fulfilled</span>
<span class="t" style="left:1335.6px;top:706.0px;font-size:14px;font-weight:400;color:#303030;letter-spacing:-0.146px;">2 items</span>
<span class="t" style="left:1428.9px;top:706.0px;font-size:14px;font-weight:400;color:#616161;letter-spacing:-0.042px;">Tracking added</span>
<span class="t" style="left:1564.5px;top:706.0px;font-size:14px;font-weight:400;color:#303030;letter-spacing:-0.640px;">TEST SHIPPING</span>
<div class="b" style="left:1762.9px;top:706px;width:62.9px;height:20px;background:#e3e3e3;border-radius:8px;"></div>
<span class="t" style="left:1769.2px;top:707.0px;font-size:13px;font-weight:400;color:#303030;letter-spacing:-0.516px;">deneme1</span>
<div class="b" style="left:1830.1px;top:706px;width:64.5px;height:20px;background:#e3e3e3;border-radius:8px;"></div>
<span class="t" style="left:1836.4px;top:707.0px;font-size:13px;font-weight:400;color:#303030;letter-spacing:-0.230px;">deneme2</span>
<div class="b" style="left:1898.9px;top:706px;width:65.9px;height:20px;background:#e3e3e3;border-radius:8px;"></div>
<span class="t" style="left:1905.2px;top:707.0px;font-size:13px;font-weight:400;color:#303030;letter-spacing:-0.130px;">deneme3</span>
<div class="b" style="left:260px;top:732px;width:2257.6px;height:34px;background:#f7f7f7;border-radius:0px;border-top:1px solid #e8e8e8;"></div>
<div class="b" style="left:272px;top:741px;width:16px;height:16px;background:#ffffff;border-radius:4px;border:1px solid #8a8a8a;"></div>
<span class="t" style="left:303.0px;top:739.5px;font-size:13px;font-weight:700;color:#303030;letter-spacing:-0.143px;">#SUPER1186</span>
<span class="t" style="left:457.5px;top:739.0px;font-size:14px;font-weight:400;color:#303030;letter-spacing:-0.197px;">Jun 14, 2022</span>
<span class="t" style="left:597.5px;top:739.0px;font-size:14px;font-weight:400;color:#303030;letter-spacing:0.073px;">MEHMET CAN GÜNGÖR</span>
<span class="t" style="left:927.9px;top:739.0px;font-size:14px;font-weight:400;color:#303030;letter-spacing:0.380px;">€12.00</span>
<div class="b" style="left:994.8px;top:739px;width:71.2px;height:20px;background:#f8d0cd;border-radius:8px;"></div>
<div class="b" style="left:1000.8499999999999px;top:744.9px;width:8px;height:8px;background:transparent;border-radius:3px;border:1.650px solid #822917;"></div>
<span class="t" style="left:1015.1px;top:740.0px;font-size:13px;font-weight:400;color:#822917;letter-spacing:-0.211px;-webkit-text-stroke:.220px #822917;">Expired</span>
<div class="b" style="left:1203.9px;top:739px;width:85.9px;height:20px;background:#fdea80;border-radius:8px;"></div>
<div class="b" style="left:1209.95px;top:744.9px;width:8px;height:8px;background:transparent;border-radius:3px;border:1.650px solid #4e4712;"></div>
<span class="t" style="left:1223.6px;top:740.0px;font-size:13px;font-weight:400;color:#4e4712;letter-spacing:0.110px;-webkit-text-stroke:.220px #4e4712;">Unfulfilled</span>
<span class="t" style="left:1335.6px;top:739.0px;font-size:14px;font-weight:400;color:#303030;letter-spacing:-0.587px;">1 item</span>
<span class="t" style="left:1564.5px;top:739.0px;font-size:14px;font-weight:400;color:#303030;letter-spacing:-0.020px;">International Shipping</span>
<div class="b" style="left:2319.5px;top:236.5px;width:190px;height:498.5px;background:#ffffff;border-radius:12px;box-shadow:0 5px 7px -1px rgba(26,26,26,.17), 0 1px 3px rgba(26,26,26,.06), 0 0 0 1px rgba(0,0,0,.12);"></div>
<div class="b" style="left:2319.5px;top:236.5px;width:190px;height:498.5px;background:transparent;border-radius:12px;overflow:hidden;"><div style="position:absolute;left:0;top:0;width:179.500px;height:17px;background:linear-gradient(rgba(0,0,0,.10),rgba(0,0,0,0));"></div><div style="position:absolute;left:182.800px;top:103.500px;width:5.700px;height:400px;background:#808080;border-radius:3px 3px 0 0;"></div></div>
<span class="t" style="left:2330.9px;top:249.0px;font-size:14px;font-weight:400;color:#303030;letter-spacing:0.052px;">Change fulfillment</span>
<span class="t" style="left:2330.9px;top:269.0px;font-size:14px;font-weight:400;color:#303030;letter-spacing:0.005px;">location</span>
<div class="b" style="left:2319.5px;top:299px;width:180px;height:1px;background:#e3e3e3;border-radius:0px;"></div>
<span class="t" style="left:2330.9px;top:312.0px;font-size:14px;font-weight:400;color:#303030;letter-spacing:-0.011px;">Archive orders</span>
<span class="t" style="left:2330.9px;top:346.0px;font-size:14px;font-weight:400;color:#303030;letter-spacing:-0.050px;">Unarchive orders</span>
<span class="t" style="left:2330.9px;top:380.0px;font-size:14px;font-weight:400;color:#303030;letter-spacing:-0.081px;">Cancel orders</span>
<div class="b" style="left:2319.5px;top:412px;width:180px;height:1px;background:#e3e3e3;border-radius:0px;"></div>
<span class="t" style="left:2330.9px;top:425.4px;font-size:14px;font-weight:400;color:#303030;letter-spacing:-0.045px;">Add tags</span>
<span class="t" style="left:2330.9px;top:459.5px;font-size:14px;font-weight:400;color:#303030;letter-spacing:-0.299px;">Remove tags</span>
<div class="b" style="left:2319.5px;top:491px;width:180px;height:1px;background:#e3e3e3;border-radius:0px;"></div>
<span class="t" style="left:2331.3px;top:504.8px;font-size:13px;font-weight:700;color:#303030;letter-spacing:-0.050px;">Apps</span>
<svg class="b" style="left:2331px;top:534.9px;" width="20" height="20" viewBox="0 0 20 20"><rect width="20" height="20" rx="3" fill="#000000"/><path fill="#ffffff" d="M9.400 3.400H16.600V6.300H11.300L7.900 11.300H3.800ZM12.600 8.500H16.600L10.900 16.600H3.600V13.800H8.700Z"/></svg>
<span class="t" style="left:2357.2px;top:534.4px;font-size:14px;font-weight:400;color:#303030;letter-spacing:-0.196px;">Send Invoice</span>
<svg class="b" style="left:2331px;top:568.9px;" width="20" height="20" viewBox="0 0 20 20"><rect width="20" height="20" rx="3" fill="#000000"/><path fill="#ffffff" d="M9.400 3.400H16.600V6.300H11.300L7.900 11.300H3.800ZM12.600 8.500H16.600L10.900 16.600H3.600V13.800H8.700Z"/></svg>
<span class="t" style="left:2357.2px;top:568.4px;font-size:14px;font-weight:400;color:#303030;letter-spacing:-0.131px;">Download Packing ...</span>
<svg class="b" style="left:2331px;top:602.9px;" width="20" height="20" viewBox="0 0 20 20"><rect width="20" height="20" rx="3" fill="#000000"/><path fill="#ffffff" d="M9.400 3.400H16.600V6.300H11.300L7.900 11.300H3.800ZM12.600 8.500H16.600L10.900 16.600H3.600V13.800H8.700Z"/></svg>
<span class="t" style="left:2357.2px;top:602.4px;font-size:14px;font-weight:400;color:#303030;letter-spacing:-0.132px;">Manage Invoice</span>
<svg class="b" style="left:2331px;top:636.9px;" width="20" height="20" viewBox="0 0 20 20"><rect width="20" height="20" rx="3" fill="#000000"/><path fill="#ffffff" d="M9.400 3.400H16.600V6.300H11.300L7.900 11.300H3.800ZM12.600 8.500H16.600L10.900 16.600H3.600V13.800H8.700Z"/></svg>
<span class="t" style="left:2357.2px;top:636.4px;font-size:14px;font-weight:400;color:#303030;letter-spacing:-0.095px;">Print Invoice</span>
<svg class="b" style="left:2331px;top:670.9px;" width="20" height="20" viewBox="0 0 20 20"><rect width="20" height="20" rx="3" fill="#000000"/><path fill="#ffffff" d="M9.400 3.400H16.600V6.300H11.300L7.900 11.300H3.800ZM12.600 8.500H16.600L10.900 16.600H3.600V13.800H8.700Z"/></svg>
<span class="t" style="left:2357.2px;top:670.4px;font-size:14px;font-weight:400;color:#303030;letter-spacing:-0.088px;">Download Invoice</span>
<svg class="b" style="left:2331px;top:704.9px;" width="20" height="20" viewBox="0 0 20 20"><rect width="20" height="20" rx="3" fill="#000000"/><path fill="#ffffff" d="M9.400 3.400H16.600V6.300H11.300L7.900 11.300H3.800ZM12.600 8.500H16.600L10.900 16.600H3.600V13.800H8.700Z"/></svg>
<span class="t" style="left:2357.2px;top:704.4px;font-size:14px;font-weight:400;color:#303030;letter-spacing:-0.157px;">Print Packing Slip</span>
<div class="b" style="left:1.5px;top:27.8px;width:234.5px;height:67.2px;background:transparent;border-radius:21px;border:5px solid #64f03e;"></div>
<div class="b" style="left:2479.1px;top:198.9px;width:40px;height:40px;background:transparent;border-radius:20px;border:5px solid #64f03e;"></div>
<div class="b" style="left:2317.1px;top:521.8px;width:184.3px;height:211.2px;background:transparent;border-radius:21px;border:5.100px solid #64f03e;"></div>
</body></html>
